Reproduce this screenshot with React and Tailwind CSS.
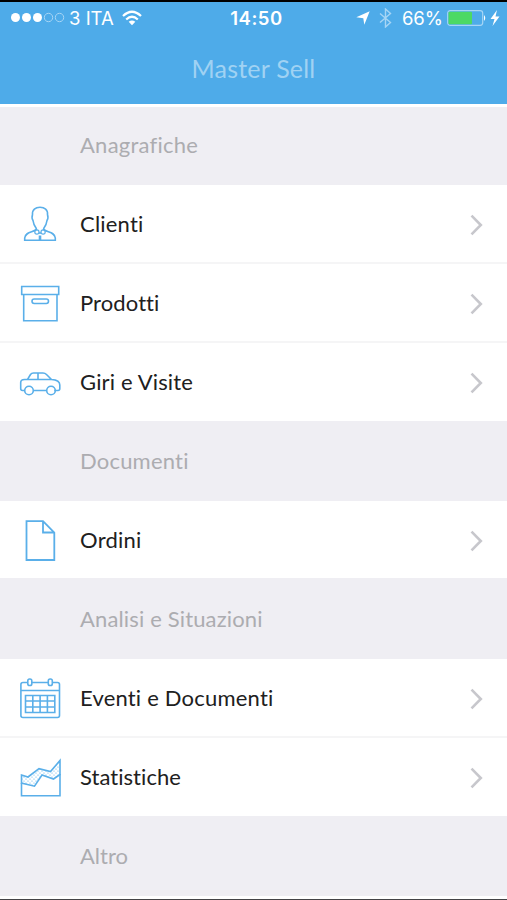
const ClientIcon = () => (
  <svg width="42" height="42" viewBox="0 0 42 42" fill="none" stroke="#5aafe9" strokeWidth="1.600">
    <path d="M17.300 27 V25.500 C15.500 23 14.300 20.500 14 17.500 C12.900 16 12.900 13.500 13.500 11.500 C13 6.500 16.500 4.300 21 4.300 C25.500 4.300 29 6.500 28.500 11.500 C29.100 13.500 29.100 16 28 17.500 C27.700 20.500 26.500 23 24.700 25.500 V27" />
    <path d="M17.300 26.500 C13.500 29.500 6.500 28.500 5.700 35 V37.300 H36.300 V35 C35.500 28.500 28.500 29.500 24.700 26.500" />
    <circle cx="17.900" cy="29" r="2.100" strokeWidth="1.200" />
    <circle cx="24.100" cy="29" r="2.100" strokeWidth="1.200" />
    <path d="M21 29 V31" />
    <path d="M21 32.500 V37" strokeWidth="2.600" />
  </svg>
)

const BoxIcon = () => (
  <svg width="42" height="42" viewBox="0 0 42 42" fill="none" stroke="#5aafe9" strokeWidth="1.600">
    <path d="M2.700 4.500 H39.700 V12.500 H2.700 Z M4.700 12.500 V38.700 H38 V12.500" />
    <rect x="13" y="17" width="16.500" height="4.500" rx="2.200" />
  </svg>
)

const CarIcon = () => (
  <svg width="42" height="42" viewBox="0 0 42 42" fill="none" stroke="#5aafe9" strokeWidth="1.600">
    <path d="M5.700 29.500 H3.500 Q1.700 29.500 1.700 27.500 V21.500 Q1.700 18.500 5.500 18.500 H8.500 L11.500 13.500 Q12.500 12 14.500 12 H24 Q26 12 27.500 13.500 L32.500 18.500 Q40.800 19 40.800 24 V27.500 Q40.800 29.500 39 29.500 H35.300 M14.500 29.500 H27 M8.500 18.500 H32.500 M19 12 V18.500" />
    <circle cx="10" cy="29.500" r="4.300" />
    <circle cx="32" cy="29.500" r="4.300" />
  </svg>
)

const FileIcon = () => (
  <svg width="42" height="42" viewBox="0 0 42 42" fill="none" stroke="#5aafe9" strokeWidth="1.800">
    <path d="M7.500 2.200 H24 L35.300 13.500 V41 H7.500 Z M24 2.200 V13.500 H35.300" />
  </svg>
)

const CalendarIcon = () => (
  <svg width="42" height="42" viewBox="0 0 42 42" fill="none" stroke="#5aafe9" strokeWidth="1.600">
    <path d="M8.500 5.500 H4 Q1.900 5.500 1.900 7.500 V38.500 Q1.900 40.500 4 40.500 H38.500 Q40.500 40.500 40.500 38.500 V7.500 Q40.500 5.500 38.500 5.500 H33.500 M13 5.500 H29 M1.900 13.500 H40.500" />
    <rect x="8.800" y="2" width="4" height="6.500" rx="1.800" />
    <rect x="29.300" y="2" width="4" height="6.500" rx="1.800" />
    <path d="M6.500 18.500 H35.800 V35.500 H6.500 Z M6.500 24 H35.800 M6.500 30 H35.800 M13.800 18.500 V35.500 M21.100 18.500 V35.500 M28.400 18.500 V35.500" />
  </svg>
)

const StatsIcon = () => (
  <svg width="42" height="42" viewBox="0 0 42 42" fill="none" stroke="#5aafe9" strokeWidth="1.600">
    <defs>
      <pattern id="dots" width="4" height="4" patternUnits="userSpaceOnUse">
        <circle cx="1" cy="1" r="0.600" fill="#5aafe9" stroke="none" />
        <circle cx="3" cy="3" r="0.600" fill="#5aafe9" stroke="none" />
      </pattern>
    </defs>
    <path d="M2.500 19 L9 21 L20 12.700 L31.500 15.500 L41 4.500 V18.500 L34.500 23 L23 19 L15.500 30.200 L2.500 27 Z" fill="url(#dots)" />
    <path d="M2.500 27 V39.800 H41 V18" />
  </svg>
)

const sections = [
  {
    title: 'Anagrafiche',
    header: 'h-[78px] pb-[2px] tracking-[0.25px]',
    items: [
      { label: 'Clienti', icon: ClientIcon, row: 'h-[79px] pt-px tracking-[0.2px]' },
      { label: 'Prodotti', icon: BoxIcon, row: 'h-[79px] pt-px tracking-[0.1px]' },
      { label: 'Giri e Visite', icon: CarIcon, row: 'h-[78px] tracking-[0.15px]' },
    ],
  },
  {
    title: 'Documenti',
    header: 'h-20 tracking-[0.2px]',
    items: [{ label: 'Ordini', icon: FileIcon, row: 'h-[77px] tracking-[0.25px]' }],
  },
  {
    title: 'Analisi e Situazioni',
    header: 'h-[81px] tracking-[0.15px]',
    items: [
      { label: 'Eventi e Documenti', icon: CalendarIcon, row: 'h-[79px] pt-px tracking-[0.2px]' },
      { label: 'Statistiche', icon: StatsIcon, row: 'h-[78px] tracking-[0.05px]' },
    ],
  },
  { title: 'Altro', header: 'h-20 tracking-[0px]', items: [] },
]

function StatusBar() {
  return (
    <div className="grid grid-cols-[1fr_auto_1fr] items-center h-8 pl-[10px] pr-[7px] text-white font-['Inter',sans-serif]">
      <div className="flex items-center">
        <svg width="55" height="12" viewBox="0 0 55 12" fill="white">
          <circle cx="5.500" cy="5.500" r="4.500" />
          <circle cx="16.500" cy="5.500" r="4.500" />
          <circle cx="27.500" cy="5.500" r="4.500" />
          <circle cx="38.500" cy="5.500" r="4.200" fill="none" stroke="#a6d5f5" />
          <circle cx="49.500" cy="5.500" r="4.200" fill="none" stroke="#a6d5f5" />
        </svg>
        <span className="ml-1 text-[18.5px] whitespace-nowrap">3 ITA</span>
        <svg className="ml-2 -mt-px" width="20" height="16" viewBox="0 0 20 16" fill="none" stroke="white" strokeWidth="2.200">
          <path d="M1 6 Q10 -2.500 19 6 M4.200 9.500 Q10 4 15.800 9.500" />
          <path d="M6.700 11.800 Q10 9 13.300 11.800 L10 15.200 Z" fill="white" stroke="none" />
        </svg>
      </div>
      <span className="pl-[3px] font-semibold text-[18.5px] tracking-[0.5px]">14:50</span>
      <div className="flex items-center justify-end">
        <svg width="14" height="14" viewBox="0 0 14 14" fill="white">
          <path d="M13.700 0.300 L8.300 13.700 L7.300 7.300 L0.300 6.300 Z" />
        </svg>
        <svg className="ml-[9px]" width="13" height="20" viewBox="0 0 13 20" fill="none" stroke="#a6d5f5" strokeWidth="1.400">
          <path d="M1 5.500 L11.500 14.500 L6.500 19 V1 L11.500 5.500 L1 14.500" />
        </svg>
        <span className="ml-[10px] text-[18.5px]">66%</span>
        <svg className="ml-1" width="40" height="16" viewBox="0 0 40 16">
          <rect x="0.700" y="0.700" width="35" height="14.600" rx="2.500" fill="none" stroke="#a6d5f5" strokeWidth="1.200" />
          <rect x="1.500" y="1.700" width="23.500" height="12.600" rx="1" fill="#4cd964" />
          <path d="M37 5 Q39.500 8 37 11 Z" fill="white" />
        </svg>
        <svg className="ml-[3px]" width="10" height="16" viewBox="0 0 10 16" fill="white">
          <path d="M7 0 L0.500 9 H4.500 L2.500 16 L9.500 6.500 H5.500 Z" />
        </svg>
      </div>
    </div>
  )
}

function MenuRow({ item, last }) {
  const Icon = item.icon
  return (
    <li className={`flex items-center bg-white pl-[19px] pr-6 ${item.row} ${last ? '' : 'border-b-2 border-[#f5f5f6]'}`}>
      <Icon />
      <span className="ml-[19px] flex-1 text-[#202020]">{item.label}</span>
      <svg className="mt-[2px]" width="13" height="22" viewBox="0 0 13 22" fill="none" stroke="#c7c7cc" strokeWidth="2.600">
        <path d="M1.500 1.700 L10.800 11 L1.500 20.300" />
      </svg>
    </li>
  )
}

export default function App() {
  return (
    <div className="w-full h-[900px] overflow-hidden bg-white border-t-2 border-t-black border-b border-b-[#444446] font-['Lato',sans-serif] text-[22px] leading-[26px]">
      <header className="h-[102px] bg-[#4eabe9]">
        <StatusBar />
        <h1 className="mt-[21px] text-center text-[25px] text-[#a0d2f3] tracking-[0.2px]">Master Sell</h1>
      </header>
      <main className="pt-[3px]">
        {sections.map((section) => (
          <section key={section.title}>
            <h2 className={`flex items-center bg-[#efeef3] pl-20 text-[#acacb0] ${section.header}`}>{section.title}</h2>
            <ul>
              {section.items.map((item, i) => (
                <MenuRow key={item.label} item={item} last={i === section.items.length - 1} />
              ))}
            </ul>
          </section>
        ))}
      </main>
    </div>
  )
}
